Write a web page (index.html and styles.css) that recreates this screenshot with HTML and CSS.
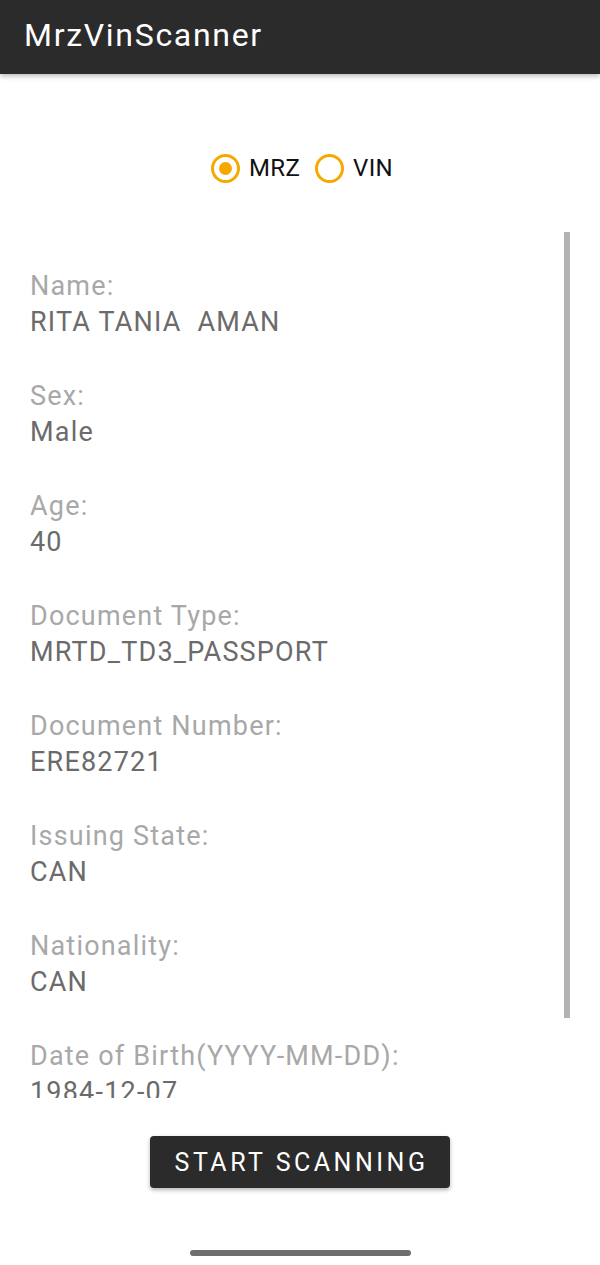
FILE: index.html
```html
<!DOCTYPE html>
<html lang="en">
<head>
<meta charset="utf-8">
<title>MrzVinScanner</title>
<link rel="stylesheet" href="styles.css">
</head>
<body>
<div class="screen">
  <header class="appbar">
    <h1 class="title">MrzVinScanner</h1>
  </header>
  <div class="radios">
    <label class="radio"><span class="circle checked"></span><span class="rlabel">MRZ</span></label>
    <label class="radio"><span class="circle"></span><span class="rlabel">VIN</span></label>
  </div>
  <div class="scroll">
    <div class="scroll-content">
      <div class="item"><div class="label">Name:</div><div class="value">RITA TANIA&nbsp;&nbsp;AMAN</div></div>
      <div class="item"><div class="label">Sex:</div><div class="value">Male</div></div>
      <div class="item"><div class="label">Age:</div><div class="value">40</div></div>
      <div class="item"><div class="label">Document Type:</div><div class="value">MRTD_TD3_PASSPORT</div></div>
      <div class="item"><div class="label">Document Number:</div><div class="value">ERE82721</div></div>
      <div class="item"><div class="label">Issuing State:</div><div class="value">CAN</div></div>
      <div class="item"><div class="label">Nationality:</div><div class="value">CAN</div></div>
      <div class="item"><div class="label">Date of Birth(YYYY-MM-DD):</div><div class="value">1984-12-07</div></div>
    </div>
    <div class="scrollbar"></div>
  </div>
  <div class="actions">
    <button class="btn">START SCANNING</button>
  </div>
  <div class="navbar"><span class="handle"></span></div>
</div>
</body>
</html>
```
FILE: styles.css
```css
html, body {
  margin: 0;
  padding: 0;
  background: #ffffff;
}
.screen {
  width: 600px;
  height: 1265px;
  overflow: hidden;
  font-family: Roboto, "Liberation Sans", sans-serif;
  display: flex;
  flex-direction: column;
}
.appbar {
  height: 74px;
  background: #2b2b2b;
  box-sizing: border-box;
  padding: 16px 0 0 24px;
  box-shadow: 0 2px 5px rgba(0, 0, 0, 0.28);
  position: relative;
  z-index: 1;
  flex: none;
}
.title {
  margin: 0;
  font-size: 32px;
  font-weight: 400;
  color: #ffffff;
  letter-spacing: 1.7px;
  line-height: normal;
}
.radios {
  margin-top: 79px;
  height: 30px;
  display: flex;
  justify-content: center;
  align-items: center;
  gap: 15px;
  flex: none;
  padding-left: 4px;
}
.radio {
  display: flex;
  align-items: center;
  gap: 9px;
}
.circle {
  width: 29px;
  height: 29px;
  box-sizing: border-box;
  border: 3px solid #f6a800;
  border-radius: 50%;
  display: flex;
  align-items: center;
  justify-content: center;
}
.circle.checked::after {
  content: "";
  width: 13px;
  height: 13px;
  border-radius: 50%;
  background: #f6a800;
}
.rlabel {
  font-size: 24px;
  color: #111111;
  line-height: 30px;
  letter-spacing: 0.3px;
}
.scroll {
  margin-top: 49px;
  height: 866px;
  position: relative;
  overflow: hidden;
  flex: none;
}
.scroll-content {
  padding: 36px 30px 0 30px;
}
.item {
  margin-bottom: 38px;
}
.label, .value {
  font-size: 27px;
  line-height: 36px;
  letter-spacing: 1.2px;
  white-space: nowrap;
}
.label {
  color: #a8a8a8;
}
.value {
  color: #6b6b6b;
}
.scrollbar {
  position: absolute;
  left: 564px;
  top: 0;
  width: 6px;
  height: 786px;
  background: #b3b3b3;
}
.actions {
  margin-top: 38px;
  display: flex;
  justify-content: center;
  flex: none;
}
.btn {
  width: 300px;
  height: 52px;
  border: none;
  border-radius: 4px;
  background: #2b2b2b;
  color: #ffffff;
  font-family: Roboto, "Liberation Sans", sans-serif;
  font-size: 25px;
  font-weight: 400;
  letter-spacing: 3.5px;
  padding: 0 0 0 3px;
  box-shadow: 0 2px 4px rgba(0, 0, 0, 0.3);
}
.navbar {
  margin-top: 62px;
  display: flex;
  justify-content: center;
  flex: none;
}
.handle {
  width: 221px;
  height: 6px;
  border-radius: 3px;
  background: #6e6e6e;
}
```
